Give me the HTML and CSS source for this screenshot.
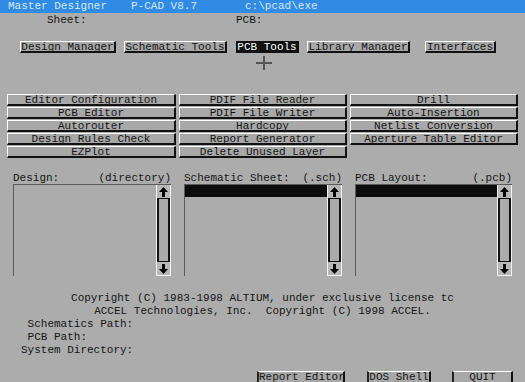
FILE: index.html
```html
<!DOCTYPE html>
<html>
<head>
<meta charset="utf-8">
<link rel="stylesheet" href="styles.css">
</head>
<body>
<div class="screen">
  <div class="titlebar">
    <span class="t1">Master Designer</span>
    <span class="t2">P-CAD V8.7</span>
    <span>c:\pcad\exe</span>
  </div>
  <div class="info">
    <span class="i1">Sheet:</span>
    <span>PCB:</span>
  </div>
  <div class="tabs">
    <div class="btn tab w-dm">Design Manager</div>
    <div class="btn tab w-st">Schematic Tools</div>
    <div class="btn tab active w-pt">PCB Tools</div>
    <div class="btn tab w-lm">Library Manager</div>
    <div class="btn tab w-if">Interfaces</div>
  </div>
  <div class="cursor">
    <svg width="16" height="14" viewBox="0 0 16 14"><rect x="7" y="0" width="2" height="14" fill="#555"/><rect x="0" y="6" width="16" height="2" fill="#555"/></svg>
  </div>
  <div class="grid">
    <div class="btn">Editor Configuration</div>
    <div class="btn">PDIF File Reader</div>
    <div class="btn">Drill</div>
    <div class="btn">PCB Editor</div>
    <div class="btn">PDIF File Writer</div>
    <div class="btn">Auto-Insertion</div>
    <div class="btn">Autorouter</div>
    <div class="btn">Hardcopy</div>
    <div class="btn">Netlist Conversion</div>
    <div class="btn">Design Rules Check</div>
    <div class="btn">Report Generator</div>
    <div class="btn">Aperture Table Editor</div>
    <div class="btn">EZPlot</div>
    <div class="btn">Delete Unused Layer</div>
  </div>
  <div class="lists">
    <div class="panel">
      <div class="plabel"><span>Design:</span><span>(directory)</span></div>
      <div class="box">
        <div class="content"></div>
        <div class="sb">
          <div class="arrow"><svg width="9" height="10" viewBox="0 0 9 10"><polygon points="4.5,0 9,5 6,5 6,10 3,10 3,5 0,5" fill="#000"/></svg></div>
          <div class="track"></div>
          <div class="arrow"><svg width="9" height="10" viewBox="0 0 9 10"><polygon points="4.5,10 9,5 6,5 6,0 3,0 3,5 0,5" fill="#000"/></svg></div>
        </div>
      </div>
    </div>
    <div class="panel">
      <div class="plabel"><span>Schematic Sheet:</span><span>(.sch)</span></div>
      <div class="box">
        <div class="content"><div class="sel"></div></div>
        <div class="sb">
          <div class="arrow"><svg width="9" height="10" viewBox="0 0 9 10"><polygon points="4.5,0 9,5 6,5 6,10 3,10 3,5 0,5" fill="#000"/></svg></div>
          <div class="track"></div>
          <div class="arrow"><svg width="9" height="10" viewBox="0 0 9 10"><polygon points="4.5,10 9,5 6,5 6,0 3,0 3,5 0,5" fill="#000"/></svg></div>
        </div>
      </div>
    </div>
    <div class="panel">
      <div class="plabel"><span>PCB Layout:</span><span>(.pcb)</span></div>
      <div class="box">
        <div class="content"><div class="sel"></div></div>
        <div class="sb">
          <div class="arrow"><svg width="9" height="10" viewBox="0 0 9 10"><polygon points="4.5,0 9,5 6,5 6,10 3,10 3,5 0,5" fill="#000"/></svg></div>
          <div class="track"></div>
          <div class="arrow"><svg width="9" height="10" viewBox="0 0 9 10"><polygon points="4.5,10 9,5 6,5 6,0 3,0 3,5 0,5" fill="#000"/></svg></div>
        </div>
      </div>
    </div>
  </div>
  <div class="copy">
    <div class="c">Copyright (C) 1983-1998 ALTIUM, under exclusive license tc</div>
    <div class="c">ACCEL Technologies, Inc.  Copyright (C) 1998 ACCEL.</div>
    <div class="p"> Schematics Path:</div>
    <div class="p"> PCB Path:</div>
    <div class="p">System Directory:</div>
  </div>
  <div class="bottom">
    <div class="btn w-re">Report Editor</div>
    <div class="btn w-ds">DOS Shell</div>
    <div class="btn w-q">QUIT</div>
  </div>
  <div class="edge"></div>
</div>
</body>
</html>
```

FILE: styles.css
```css
html, body {
  margin: 0;
  padding: 0;
}
body {
  background: #acacac;
  font-family: "Liberation Mono", "DejaVu Sans Mono", monospace;
  font-size: 11px;
  color: #151515;
}
.screen {
  width: 525px;
  height: 382px;
  overflow: hidden;
}
.titlebar {
  height: 13px;
  line-height: 13px;
  background: #2f8be3;
  color: #d8e8f6;
  padding-left: 8px;
  display: flex;
  white-space: pre;
}
.t1 { width: 123px; }
.t2 { width: 114px; }
.info {
  height: 14px;
  line-height: 14px;
  padding-left: 47px;
  display: flex;
}
.i1 { width: 189px; }
.tabs {
  margin-top: 14px;
  height: 12px;
  padding-left: 20px;
  display: flex;
  gap: 8px;
}
.btn {
  box-sizing: border-box;
  height: 12px;
  background: #a8a8a8;
  border-top: 1px solid #fff;
  border-left: 1px solid #fff;
  border-right: 2px solid #111;
  border-bottom: 2px solid #111;
  line-height: 10px;
  text-align: center;
  white-space: pre;
  overflow: hidden;
}
.tab.active {
  background: #111;
  color: #fff;
  border-color: #111;
  margin-left: 1px;
}
.w-dm { width: 96px; }
.w-st { width: 103px; }
.w-pt { width: 63px; }
.w-lm { width: 103px; }
.w-if { width: 71px; margin-left: 7px; }
.cursor {
  box-sizing: border-box;
  height: 41px;
  padding-left: 256px;
  padding-top: 3px;
}
.cursor svg { display: block; }
.grid {
  padding-left: 7px;
  display: grid;
  grid-template-columns: 169px 168px 168px;
  grid-auto-rows: 12px;
  column-gap: 3px;
  row-gap: 1px;
}
.lists {
  margin-top: 15px;
  padding-left: 13px;
  display: grid;
  grid-template-columns: 158px 158px 157px;
  column-gap: 13px;
}
.plabel {
  height: 11px;
  line-height: 11px;
  display: flex;
  justify-content: space-between;
}
.box {
  height: 91px;
  border-left: 1px solid #5a5a5a;
  border-top: 1px solid #5a5a5a;
  display: flex;
}
.content {
  flex: 1;
}
.sel {
  height: 12px;
  background: #0d0d0d;
}
.sb {
  box-sizing: border-box;
  width: 15px;
  border: 1px solid #f2f2f2;
  border-top: none;
  display: flex;
  flex-direction: column;
  background: #ababab;
}
.arrow {
  height: 13px;
  display: flex;
  align-items: center;
  justify-content: center;
  background: #b8b8b8;
}
.track {
  flex: 1;
  border-left: 2px solid #111;
  border-right: 2px solid #111;
  border-top: 1px solid #111;
  border-bottom: 1px solid #111;
}
.copy {
  margin-top: 16px;
  line-height: 13px;
}
.c { text-align: center; white-space: pre; }
.p { padding-left: 21px; white-space: pre; }
.bottom {
  margin-top: 14px;
  padding-left: 257px;
  display: flex;
  gap: 22px;
}
.bottom .btn {
  height: 11px;
  border-left: 2px solid #222;
  border-bottom: none;
  line-height: 10px;
}
.w-re { width: 88px; }
.w-ds { width: 64px; }
.w-q { width: 61px; margin-left: -1px; }
.edge {
  height: 1px;
  background: #111;
}
```
